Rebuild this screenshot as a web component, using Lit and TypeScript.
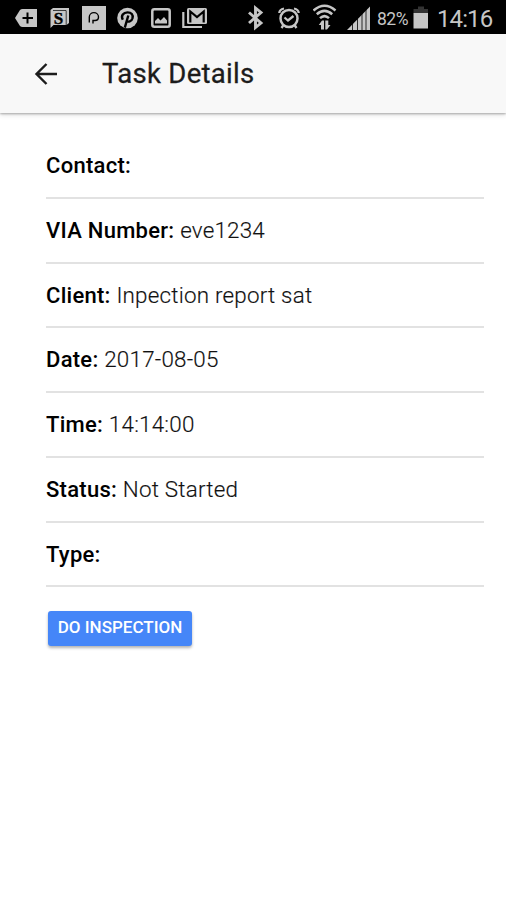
import { LitElement, html, css, svg } from "lit";
import { customElement, property } from "lit/decorators.js";

@customElement("status-bar")
class StatusBar extends LitElement {
  static styles = css`
    :host {
      display: grid;
      grid-template-columns: 35px 32px 35px 34px 31px 66px 30px 35px 34px 30px 36px 24px 69px;
      height: 34px;
      padding-left: 15px;
      box-sizing: border-box;
      background: #000;
      color: #c6c6c6;
      align-items: center;
      overflow: hidden;
      white-space: nowrap;
    }
    svg { display: block; height: 34px; fill: none; stroke: #c6c6c6; stroke-width: 2; }
    .solid { fill: #c6c6c6; stroke: none; }
    .ink { stroke: #000; }
    .serif { font: bold 17px "Liberation Serif", serif; fill: #000; stroke: #000; stroke-width: 0.4; }
    .percent { font-size: 17.500px; letter-spacing: -0.5px; padding: 3px 0 0 0; }
    .clock { font-size: 24px; letter-spacing: -0.9px; padding: 3px 0 0 0; }
  `;

  private icon(x: number, w: number, body: unknown) {
    return html`<svg width=${w} viewBox="${x} 0 ${w} 34">${body}</svg>`;
  }

  render() {
    return html`
      ${this.icon(15, 23, svg`
        <path class="solid" d="M15 18 20 10Q21 9 22.500 9H37V27H22.500Q21 27 20 26Z"/>
        <path class="ink" d="M27.500 12.500V23.500M22.500 18H33"/>`)}
      ${this.icon(50, 20, svg`
        <path class="solid" d="M53 8H69V23L66.500 25H53.500L50.500 28V10Z"/>
        <path class="ink" stroke-width="0.700" d="M66.200 10.500V25M53 10.500H66"/>
        <text class="serif" x="53.800" y="23.500">S</text>`)}
      ${this.icon(82, 24, svg`
        <path class="solid" d="M82 6H106V30H82Z"/>
        <path class="ink" stroke-width="1.400" d="M89.300 22.500V17A4.600 4.400 0 0 1 98.500 17Q98.500 20.500 95 20.500H93V23.500"/>`)}
      ${this.icon(116.5, 21, svg`
        <circle class="solid" cx="127" cy="18" r="10.300"/>
        <path class="ink" stroke-width="2.400" d="M122.300 19.800C120 15.500 123 12.400 127 12.400C131 12.400 132.800 15 132 18.200C131 21.800 127.500 22.500 126.200 20.500M127.800 15.500 124.300 27.600"/>`)}
      ${this.icon(151, 20, svg`
        <rect x="152.300" y="9.300" width="17.400" height="17.400" rx="2" stroke-width="2.500"/>
        <path class="solid" d="M155 23.500V21L158 18 160.500 20.500 164 17 167 20.500V23.500Z"/>`)}
      ${this.icon(182, 26, svg`
        <path stroke-width="2.200" d="M183.300 12V27H202"/>
        <rect class="solid" x="187" y="8" width="20" height="16" rx="1.500"/>
        <path class="ink" stroke-width="2.200" d="M190.300 22.500V11.500L197 17 203.700 11.500V22.500"/>`)}
      ${this.icon(248, 16, svg`
        <path stroke-width="2.900" d="M249 12.500 261 23 255.500 27.500V8L261 12.500 249 23"/>`)}
      ${this.icon(278, 23, svg`
        <circle cx="289" cy="18.500" r="8.500" stroke-width="2.500"/>
        <path stroke-width="2.300" d="M284.500 17.500 288 20.500 293.500 16M279.300 13Q279.500 9.500 284 8.500M298.700 13Q298.500 9.500 294 8.500M283.500 25 281.500 28M294.500 25 296.500 28"/>`)}
      ${this.icon(313, 24, svg`
        <path stroke-width="2.500" d="M313.500 10.500Q324.500 1 335.500 10.500M316.800 14.300Q324.500 7.500 332.200 14.300M320 18.200Q324.500 14 329 18.200"/>
        <path class="solid" d="M318.800 25 322 20.500H324V29.500H321V25ZM325.300 20.500H328.300V25H330.500L327 29.500H325.300Z"/>`)}
      ${this.icon(347, 24, svg`
        <path class="solid" d="M347 30 370 6.500V30Z"/>
        <path class="ink" stroke-width="0.800" d="M352.500 22V30M357.500 17V30M362 12V30M366 8V30"/>`)}
      <span class="percent">82%</span>
      ${this.icon(413, 16, svg`
        <path class="solid" d="M413.500 13H428V28.500H413.500Z"/>
        <path fill="#333" stroke="none" d="M413.500 9H418V6.500H424V9H428V13H413.500Z"/>`)}
      <span class="clock">14:16</span>
    `;
  }
}

@customElement("task-field")
class TaskField extends LitElement {
  @property() label = "";
  @property() value = "";
  static styles = css`
    :host {
      display: block;
      height: 64.75px;
      line-height: 62px;
      box-sizing: border-box;
      border-bottom: 2px solid #e2e2e2;
      font-size: 22px;
      color: #111;
      white-space: pre;
    }
    .label { font-weight: 500; color: #000; letter-spacing: 0.27px; }
    .value { font-weight: 300; font-size: 22.400px; letter-spacing: 0.22px; -webkit-text-stroke: 0.15px #111; }
  `;
  render() {
    return html`<span class="label">${this.label}: </span><span class="value">${this.value}</span>`;
  }
}

@customElement("app-root")
class AppRoot extends LitElement {
  static styles = css`
    :host {
      display: block;
      height: 900px;
      overflow: hidden;
      background: #fff;
      font-family: Roboto, sans-serif;
    }
    header {
      display: flex;
      align-items: center;
      height: 79px;
      padding-left: 34px;
      background: #f8f8f8;
      box-shadow: 0 1px 2px rgba(0, 0, 0, 0.28), 0 2px 5px rgba(0, 0, 0, 0.12);
    }
    header svg { display: block; fill: none; stroke: #1c1c1c; stroke-width: 2.4; }
    h1 { margin: 0 0 0 44px; font-size: 27.500px; line-height: 34px; font-weight: 400; letter-spacing: 0.3px; color: #1c1c1c; -webkit-text-stroke: 0.3px #1c1c1c; }
    main { display: block; padding: 21px 22px 0 46px; }
    button {
      display: block;
      margin: 24px 0 0 2px;
      width: 144px;
      height: 35px;
      padding: 0 0 3px;
      border: 0;
      border-radius: 3px;
      background: #4586f8;
      color: #fff;
      font: 500 17px Roboto, sans-serif;
      white-space: nowrap;
      box-shadow: 0 2px 3px rgba(0, 0, 0, 0.3);
    }
  `;

  private fields = [
    ["Contact", ""],
    ["VIA Number", "eve1234"],
    ["Client", "Inpection report sat"],
    ["Date", "2017-08-05"],
    ["Time", "14:14:00"],
    ["Status", "Not Started"],
    ["Type", ""],
  ];

  render() {
    return html`
      <status-bar></status-bar>
      <header>
        <svg width="24" height="24" viewBox="0 0 24 24"><path d="M23 12H2.500M12.500 2 2.500 12 12.500 22"/></svg>
        <h1>Task Details</h1>
      </header>
      <main>
        ${this.fields.map(([label, value]) => html`<task-field .label=${label} .value=${value}></task-field>`)}
        <button>DO INSPECTION</button>
      </main>
    `;
  }
}
